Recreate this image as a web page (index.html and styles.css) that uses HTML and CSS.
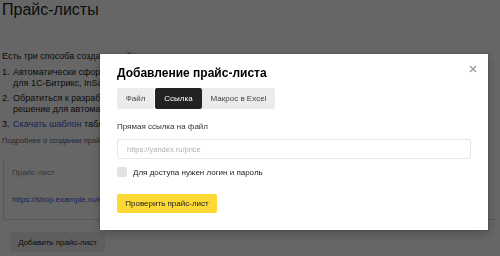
FILE: index.html
```html
<html lang="ru">

<head>
    <meta charset="utf-8" />
    <title>Прайс-листы</title>
    <link rel="stylesheet" href="styles.css">
</head>

<body>

    <div class="page">
        <h1 class="page-title">Прайс-листы</h1>

        <p class="intro">Есть три способа создать прайс-лист для вашего магазина:</p>
        <ol class="ways">
            <li>Автоматически сформировать прайс-лист в системах управления сайтом<br>
                для 1С-Битрикс, InSales, UMI.CMS и других.</li>
            <li>Обратиться к разработчику вашего сайта — он подготовит готовое<br>
                решение для автоматической выгрузки.</li>
            <li><a href="#" class="link">Скачать шаблон</a> таблицы и заполнить его вручную.</li>
        </ol>
        <p class="more">Подробнее о создании прайс-листа</p>

        <div class="price-box">
            <div class="price-head">Прайс-лист</div>
            <div class="price-row"><a href="#" class="price-link">https://shop.example.ru/export/price-list.xml</a></div>
        </div>

        <button class="add-btn">Добавить прайс-лист</button>
    </div>

    <div class="overlay">
        <div class="modal">
            <span class="close">
                <svg width="8" height="8" viewBox="0 0 8 8">
                    <path d="M1 1L7 7M7 1L1 7" stroke="#9a9a9a" stroke-width="1.3" fill="none" />
                </svg>
            </span>

            <h2 class="modal-title">Добавление прайс-листа</h2>

            <div class="tabs">
                <span class="tab tab-file">Файл</span>
                <span class="tab tab-link active">Ссылка</span>
                <span class="tab tab-macro">Макрос в Excel</span>
            </div>

            <div class="field-label">Прямая ссылка на файл</div>
            <input class="url-input" type="text" placeholder="https://yandex.ru/price">

            <label class="check-row">
                <span class="checkbox"></span>
                <span>Для доступа нужен логин и пароль</span>
            </label>

            <button class="check-btn">Проверить прайс-лист</button>
        </div>
    </div>

</body>

</html>
```

FILE: styles.css
```css
body {
    margin: 0;
    font-family: "Liberation Sans", Arial, sans-serif;
    color: #222;
    background: #fff;
}

.page {
    padding: 0 2px;
}

.page-title {
    margin: 0;
    font-size: 16px;
    line-height: 20px;
    font-weight: normal;
}

.intro {
    margin: 31px 0 0;
    font-size: 9px;
    line-height: 11px;
    white-space: nowrap;
}

.ways {
    margin: 5px 0 0;
    padding-left: 10px;
    font-size: 9px;
    line-height: 11px;
    white-space: nowrap;
}

.ways li {
    margin-bottom: 4px;
    padding-left: 1px;
}

.link {
    color: #3d56d8;
    text-decoration: none;
}

.more {
    margin: 6px 0 0;
    font-size: 7.5px;
    line-height: 10px;
    color: #666;
}

.price-box {
    margin: 13px 0 0 1px;
    border-left: 1px solid #e0e0e0;
    border-bottom: 1px solid #e0e0e0;
    height: 60px;
    padding-left: 8px;
}

.price-head {
    padding-top: 9px;
    font-size: 8px;
    line-height: 10px;
    color: #8a8a8a;
}

.price-row {
    margin-top: 17px;
    font-size: 8px;
    line-height: 10px;
}

.price-link {
    color: #4b55e0;
    text-decoration: none;
}

.add-btn {
    margin: 12px 0 0 8px;
    width: 95px;
    height: 20px;
    border: none;
    border-radius: 2px;
    background: #ececec;
    font-family: inherit;
    font-size: 8px;
    color: #222;
    padding: 0;
}

.overlay {
    position: fixed;
    inset: 0;
    background: rgba(0, 0, 0, 0.6);
    padding: 54px 0 0 100px;
}

.modal {
    position: relative;
    width: 388px;
    box-sizing: border-box;
    background: #fff;
    padding: 11px 17px 17px;
    box-shadow: 0 0 0 1px rgba(0, 0, 0, 0.08), 0 3px 10px rgba(0, 0, 0, 0.25);
}

.close {
    position: absolute;
    top: 11px;
    right: 11px;
    width: 8px;
    height: 8px;
    display: block;
}

.close svg {
    display: block;
}

.modal-title {
    margin: 0;
    font-size: 12px;
    line-height: 16px;
    font-weight: bold;
    color: #000;
}

.tabs {
    margin-top: 7px;
    display: flex;
    height: 21px;
}

.tab {
    display: flex;
    align-items: center;
    justify-content: center;
    background: #ebebeb;
    font-size: 8px;
    color: #444;
    box-sizing: border-box;
}

.tab-file {
    width: 37px;
    border-radius: 2px 0 0 2px;
}

.tab-link {
    width: 47px;
    margin-left: 1px;
}

.tab-macro {
    width: 73px;
    border-radius: 0 2px 2px 0;
}

.tab.active {
    background: #222;
    color: #fff;
    border-radius: 2px;
}

.field-label {
    margin-top: 13px;
    font-size: 8px;
    line-height: 10px;
    color: #333;
}

.url-input {
    display: block;
    margin-top: 7px;
    width: 354px;
    height: 20px;
    box-sizing: border-box;
    border: 1px solid #e6e6e6;
    border-radius: 2px;
    padding: 0 9px;
    font-family: inherit;
    font-size: 7.5px;
    color: #222;
    outline: none;
}

.url-input::placeholder {
    color: #b0b0b0;
}

.check-row {
    margin-top: 8px;
    display: flex;
    align-items: center;
    gap: 6px;
    height: 10px;
    font-size: 8px;
    color: #222;
}

.checkbox {
    width: 10px;
    height: 10px;
    border-radius: 2px;
    background: #e3e3e3;
}

.check-btn {
    display: block;
    margin-top: 17px;
    width: 100px;
    height: 19px;
    border: none;
    border-radius: 2px;
    background: #fcd935;
    font-family: inherit;
    font-size: 8px;
    color: #222;
    padding: 0;
}
```
